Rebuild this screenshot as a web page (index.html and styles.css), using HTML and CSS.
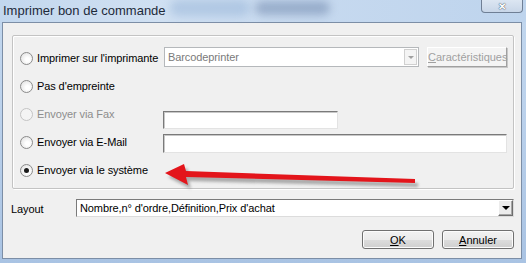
FILE: index.html
```html
<!DOCTYPE html>
<html lang="fr">
<head>
  <meta charset="UTF-8" />
  <title>Imprimer bon de commande</title>
  <link rel="stylesheet" href="styles.css">
</head>
<body>
  <div class="window">
    <div class="titlebar">
      <span class="title">Imprimer bon de commande</span>
      <span class="blur blur-a"></span>
      <span class="blur blur-b"></span>
      <button class="close" type="button">&#x2715;</button>
    </div>

    <div class="client">
      <div class="group">
        <div class="row">
          <label class="opt"><span class="radio"></span>Imprimer sur l'imprimante</label>
          <div class="combo disabled printer">
            <span class="combo-text">Barcodeprinter</span>
            <span class="combo-btn"><span class="tri"></span></span>
          </div>
          <button class="btn-flat" type="button" disabled><u>C</u>aractéristiques</button>
        </div>
        <div class="row">
          <label class="opt"><span class="radio"></span>Pas d'empreinte</label>
        </div>
        <div class="row">
          <label class="opt off"><span class="radio"></span>Envoyer via Fax</label>
          <input class="field fax" type="text" />
        </div>
        <div class="row">
          <label class="opt"><span class="radio"></span>Envoyer via E-Mail</label>
          <input class="field mail" type="text" />
        </div>
        <div class="row">
          <label class="opt"><span class="radio checked"></span>Envoyer via le système</label>
        </div>
      </div>

      <div class="layout-row">
        <span class="layout-label">Layout</span>
        <div class="combo layout">
          <span class="combo-text">Nombre,n° d'ordre,Définition,Prix d'achat</span>
          <span class="combo-btn raised"><span class="tri"></span></span>
        </div>
      </div>

      <div class="actions">
        <button class="btn" type="button"><u>O</u>K</button>
        <button class="btn" type="button"><u>A</u>nnuler</button>
      </div>
    </div>

    <svg class="arrow" width="526" height="263" viewBox="0 0 526 263">
      <defs>
        <filter id="soft" x="-10%" y="-50%" width="120%" height="200%">
          <feGaussianBlur stdDeviation="1.6" />
        </filter>
      </defs>
      <g transform="translate(3 4)" fill="#6e6e6e" opacity="0.55" filter="url(#soft)">
        <polygon points="165,173 184,164 186,171 415,179 415,183 186,177 188,185" />
      </g>
      <polygon points="165,173 184,164 186,171 415,179 415,183 186,177 188,185" fill="#e3151b" />
    </svg>
  </div>
</body>
</html>
```

FILE: styles.css
```css
html, body {
  margin: 0;
  padding: 0;
}

body {
  width: 526px;
  height: 263px;
  overflow: hidden;
  font-family: "Liberation Sans", Arial, sans-serif;
  font-size: 11px;
  letter-spacing: -0.1px;
  color: #000;
}

.window {
  position: relative;
  width: 526px;
  height: 263px;
  box-sizing: border-box;
  padding: 0 4px 4px 2px;
  display: flex;
  flex-direction: column;
  background: linear-gradient(180deg, #c2d7ee 0%, #bcd2ec 40%, #a9c3e3 100%);
}

/* title bar */
.titlebar {
  position: relative;
  height: 22px;
  display: flex;
  align-items: flex-start;
  background: linear-gradient(90deg, #c2d7ee 0%, #d0e0f2 30%, #c6d9ef 60%, #bed4ed 100%);
  margin: 0 -4px 0 -2px;
}

.title {
  position: relative;
  z-index: 1;
  font-family: "Liberation Sans", Arial, sans-serif;
  font-size: 13px;
  letter-spacing: 0;
  color: #1d2a3a;
  padding: 3px 0 0 3px;
  line-height: 16px;
}

.blur {
  position: absolute;
  border-radius: 8px;
  filter: blur(4px);
}

.blur-a {
  left: 170px;
  top: 0;
  width: 80px;
  height: 16px;
  background: rgba(150, 180, 215, 0.5);
}

.blur-b {
  left: 255px;
  top: 1px;
  width: 75px;
  height: 14px;
  background: rgba(95, 120, 160, 0.45);
}

.close {
  margin-left: auto;
  margin-right: 3px;
  width: 42px;
  height: 13px;
  padding: 0;
  border: 1px solid #6f7f95;
  border-top: none;
  border-radius: 0 0 4px 4px;
  background: linear-gradient(180deg, #dce6f2, #c8d6e8);
  color: #ffffff;
  font-size: 10px;
  line-height: 11px;
  text-shadow: 0 0 1px #3c4a5e, 0 0 1px #3c4a5e;
  font-weight: bold;
}

/* client area */
.client {
  flex: 1;
  background: #f0f0f0;
  border: 1px solid #7c8ea6;
  padding: 12px 7px 0 8px;
  display: flex;
  flex-direction: column;
}

.group {
  width: 502px;
  height: 154px;
  box-sizing: border-box;
  margin-left: 1px;
  border: 1px solid #c3c3c3;
  border-radius: 2px;
  box-shadow: inset 1px 1px 0 #fff, 1px 1px 0 #fff;
  padding: 8px 0 0 7px;
}

.row {
  height: 28px;
  display: flex;
  align-items: center;
}

.opt {
  width: 143px;
  flex: none;
  display: flex;
  align-items: center;
  gap: 4px;
  white-space: nowrap;
}

.opt.off {
  color: #8d8d8d;
}

.radio {
  width: 11px;
  height: 11px;
  flex: none;
  border: 1px solid #8b8b8b;
  border-radius: 50%;
  background: radial-gradient(circle at 60% 60%, #ffffff 20%, #e0e0e0 90%);
  position: relative;
}

.opt.off .radio {
  border-color: #c4c4c4;
  background: #f4f4f4;
}

.radio.checked::after {
  content: "";
  position: absolute;
  left: 3px;
  top: 3px;
  width: 5px;
  height: 5px;
  border-radius: 50%;
  background: #1b1b1b;
}

.combo {
  box-sizing: border-box;
  display: flex;
  align-items: center;
  background: #fff;
  border: 1px solid #adb2b5;
  padding: 0 1px 0 3px;
}

.combo-text {
  flex: 1;
  white-space: nowrap;
}

.combo.printer {
  width: 255px;
  height: 20px;
  margin-left: 1px;
  margin-top: -2px;
}

.combo.disabled {
  color: #7a7a7a;
  border-color: #b5b8bb;
}

.combo-btn {
  width: 13px;
  height: 16px;
  box-sizing: border-box;
  border: 1px solid #d0d0d0;
  background: #f4f4f4;
  display: flex;
  align-items: center;
  justify-content: center;
}

.tri {
  width: 0;
  height: 0;
  border-left: 3px solid transparent;
  border-right: 3px solid transparent;
  border-top: 3px solid #a0a0a0;
}

.combo-btn.raised {
  width: 15px;
  height: 16px;
  border: 1px solid;
  border-color: #ffffff #6d6d6d #6d6d6d #ffffff;
  background: #ececec;
  box-shadow: inset -1px -1px 0 #a6a6a6;
}

.combo-btn.raised .tri {
  border-top-color: #000;
  border-left-width: 4px;
  border-right-width: 4px;
  border-top-width: 4px;
}

.btn-flat {
  margin-left: 8px;
  margin-top: -2px;
  width: 80px;
  height: 20px;
  padding: 0;
  font-family: inherit;
  font-size: 11px;
  letter-spacing: 0;
  color: #a0a0a0;
  background: #f4f4f4;
  border: 1px solid;
  border-color: #ffffff #a0a0a0 #a0a0a0 #ffffff;
  box-shadow: 1px 1px 0 #c8c8c8;
}

.field {
  box-sizing: border-box;
  margin: 0;
  padding: 0;
  background: #fff;
  border: 1px solid;
  border-color: #7a7a7a #e3e3e3 #e3e3e3 #7a7a7a;
  box-shadow: inset 1px 1px 0 #c8c8c8;
}

.field.fax {
  width: 175px;
  height: 18px;
  margin-top: 12px;
}

.field.mail {
  width: 344px;
  height: 19px;
  margin-top: 3px;
}

/* layout row */
.layout-row {
  display: flex;
  align-items: center;
  margin-top: 10px;
}

.layout-label {
  width: 65px;
  flex: none;
  padding-top: 1px;
}

.combo.layout {
  width: 440px;
  height: 18px;
  border-color: #7a7a7a #dcdcdc #dcdcdc #7a7a7a;
  padding-right: 0;
}

/* buttons */
.actions {
  display: flex;
  justify-content: flex-end;
  gap: 8px;
  margin-top: 13px;
  padding-right: 0;
}

.btn {
  width: 72px;
  height: 19px;
  padding: 0;
  font-family: inherit;
  font-size: 11px;
  color: #000;
  border: 1px solid #707070;
  border-radius: 3px;
  background: linear-gradient(180deg, #f2f2f2 0%, #ebebeb 50%, #dddddd 51%, #cfcfcf 100%);
  box-shadow: inset 0 0 0 1px #fcfcfc;
}

.arrow {
  position: absolute;
  left: 0;
  top: 0;
  pointer-events: none;
}
```
